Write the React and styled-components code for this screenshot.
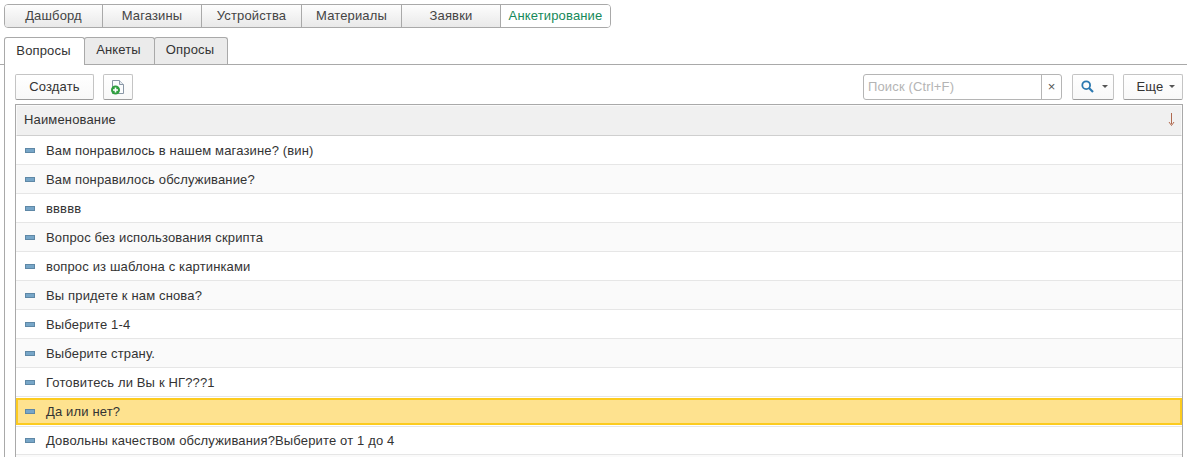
import React from "react";
import styled, { createGlobalStyle } from "styled-components";

const GlobalStyle = createGlobalStyle`
  html, body {
    margin: 0;
    height: 100%;
    overflow: hidden;
    background: #fff;
    font-family: "Liberation Sans", Arial, sans-serif;
    font-size: 13px;
    letter-spacing: 0.15px;
    color: #333;
  }
`;

const sections = [
  { title: "Дашборд", width: 98 },
  { title: "Магазины", width: 99 },
  { title: "Устройства", width: 100 },
  { title: "Материалы", width: 100 },
  { title: "Заявки", width: 99 },
  { title: "Анкетирование", width: 111, active: true },
];

const tabs = [
  { title: "Вопросы", width: 81, active: true },
  { title: "Анкеты", width: 71 },
  { title: "Опросы", width: 74 },
];

const questions = [
  "Вам понравилось в нашем магазине? (вин)",
  "Вам понравилось обслуживание?",
  "ввввв",
  "Вопрос без использования скрипта",
  "вопрос из шаблона с картинками",
  "Вы придете к нам снова?",
  "Выберите 1-4",
  "Выберите страну.",
  "Готовитесь ли Вы к НГ???1",
  "Да или нет?",
  "Довольны качеством обслуживания?Выберите от 1 до 4",
  "",
];

const App = () => {
  return (
    <Page>
      <GlobalStyle />
      <SectionBar>
        {sections.map((s) => (
          <Section key={s.title} $width={s.width} $active={s.active}>
            {s.title}
          </Section>
        ))}
      </SectionBar>
      <TabBar>
        {tabs.map((t) => (
          <Tab key={t.title} $width={t.width} $active={t.active}>
            {t.title}
          </Tab>
        ))}
      </TabBar>
      <Panel>
        <Toolbar>
          <Button $width={79}>Создать</Button>
          <Button $width={30}>
            <NewDocIcon />
          </Button>
          <Spacer />
          <SearchBox>
            <SearchInput>Поиск (Ctrl+F)</SearchInput>
            <ClearBtn>×</ClearBtn>
          </SearchBox>
          <Button $width={42} $inset={2} $gap={8}>
            <SearchIcon />
            <Caret />
          </Button>
          <Button $width={60} $inset={6}>
            Еще
            <Caret />
          </Button>
        </Toolbar>
        <Table>
          <HeadRow>
            Наименование
            <SortIcon />
          </HeadRow>
          {questions.map((q, i) => (
            <Row key={i} $odd={i % 2 === 1} $selected={q === "Да или нет?"}>
              {q && <Marker />}
              {q}
            </Row>
          ))}
        </Table>
      </Panel>
    </Page>
  );
};
export default App;

const NewDocIcon = () => (
  <svg width="16" height="17" viewBox="0 0 16 17">
    <path d="M2.5 2.5h7l4 4v9h-11z" fill="#fbfcfd" stroke="#8a97a6" />
    <path d="M9.5 2.5v4h4" fill="#e4eaf0" stroke="#8a97a6" />
    <circle cx="5.5" cy="12" r="4.5" fill="#2f9e3f" />
    <path d="M3 12h5M5.5 9.5v5" stroke="#fff" strokeWidth="1.6" />
  </svg>
);

const SearchIcon = () => (
  <svg width="13" height="13" viewBox="0 0 13 13">
    <circle cx="5.2" cy="5.2" r="3.9" fill="none" stroke="#2b78b0" strokeWidth="1.8" />
    <path d="M8 8l4 4" stroke="#2b78b0" strokeWidth="2.2" />
  </svg>
);

const SortIcon = () => (
  <SortSvg width="7" height="13" viewBox="0 0 7 13">
    <path d="M3.5 0v11" stroke="#b0694f" />
    <path d="M1 9l2.5 3.5L6 9" fill="none" stroke="#b0694f" />
  </SortSvg>
);

const Page = styled.div`
  width: 1187px;
  height: 457px;
  overflow: hidden;
  padding-top: 4px;
  box-sizing: border-box;
`;

const SectionBar = styled.div`
  display: flex;
  width: 607px;
  height: 24px;
  margin-left: 4px;
  box-sizing: border-box;
  border: 1px solid #a9a9a9;
  border-radius: 4px;
  overflow: hidden;
`;

const Section = styled.div`
  flex: 0 0 ${(p) => p.$width - (p.$active ? 1 : 0)}px;
  box-sizing: border-box;
  display: flex;
  align-items: center;
  justify-content: center;
  padding-bottom: 1px;
  border-left: 1px solid #a9a9a9;
  background: ${(p) => (p.$active ? "#fff" : "linear-gradient(#fdfdfd, #e9e9e9)")};
  color: ${(p) => (p.$active ? "#16895a" : "#444")};
  &:first-child {
    border-left: none;
    flex-basis: ${(p) => p.$width - 1}px;
  }
`;

const TabBar = styled.div`
  display: flex;
  height: 28px;
  margin-top: 9px;
  padding-left: 4px;
  box-sizing: border-box;
  border-bottom: 1px solid #a9a9a9;
`;

const Tab = styled.div`
  box-sizing: border-box;
  flex: 0 0 ${(p) => p.$width}px;
  margin-left: ${(p) => (p.$active ? 0 : -1)}px;
  height: ${(p) => (p.$active ? 28 : 27)}px;
  border: 1px solid #a9a9a9;
  border-bottom: none;
  border-radius: 3px 3px 0 0;
  background: ${(p) => (p.$active ? "#fff" : "#ebebeb")};
  display: flex;
  align-items: center;
  justify-content: center;
  padding: 0 2px 3px 0;
  position: relative;
  z-index: ${(p) => (p.$active ? 1 : 0)};
`;

const Panel = styled.div`
  margin-left: 4px;
  padding: 9px 4px 0 10px;
  height: 393px;
  box-sizing: border-box;
  border-left: 1px solid #a9a9a9;
`;

const Toolbar = styled.div`
  display: flex;
  align-items: flex-start;
  gap: 9px;
  height: 30px;
`;

const Spacer = styled.div`
  flex: 1;
`;

const Button = styled.div`
  box-sizing: border-box;
  flex: 0 0 ${(p) => p.$width}px;
  height: 26px;
  display: flex;
  align-items: center;
  justify-content: center;
  gap: ${(p) => p.$gap || 6}px;
  padding: 0 0 1px ${(p) => p.$inset || 0}px;
  background: linear-gradient(#fff, #f8f8f8);
  border: 1px solid #c4c4c4;
  border-bottom-color: #9c9c9c;
  border-radius: 2px;
`;

const Caret = styled.span`
  width: 0;
  height: 0;
  border-left: 3px solid transparent;
  border-right: 3px solid transparent;
  border-top: 3px solid #555;
`;

const SearchBox = styled.div`
  box-sizing: border-box;
  display: flex;
  width: 199px;
  height: 26px;
  margin-right: 1px;
  border: 1px solid #b5b5b5;
  border-radius: 3px;
`;

const SearchInput = styled.div`
  flex: 1;
  padding-left: 4px;
  line-height: 24px;
  color: #b4b4b4;
`;

const ClearBtn = styled.div`
  flex: 0 0 19px;
  border-left: 1px solid #b5b5b5;
  text-align: center;
  line-height: 24px;
  color: #555;
`;

const Table = styled.div`
  box-sizing: border-box;
  width: 1168px;
  border: 1px solid #a9a9a9;
  border-bottom: none;
  height: 360px;
`;

const HeadRow = styled.div`
  box-sizing: border-box;
  height: 31px;
  display: flex;
  align-items: center;
  justify-content: space-between;
  padding: 0 6px 3px 7px;
  background: #f0f0f0;
  border: 1px solid #fafafa;
  border-bottom: 1px solid #cfcfcf;
`;

const SortSvg = styled.svg`
  display: block;
`;

const Row = styled.div`
  box-sizing: border-box;
  height: 29px;
  display: flex;
  align-items: center;
  padding-left: 8px;
  background: ${(p) => (p.$selected ? "#fee28f" : p.$odd ? "#fafafa" : "#fff")};
  border-bottom: 1px solid #e6e6e6;
  ${(p) => p.$selected && `
    height: 27px;
    margin: 1px 0;
    padding-left: 6px;
    border: 2px solid #fccb1f;
    position: relative;
    box-shadow: 0 1px 0 #fff, 0 2px 0 #e6e6e6;
  `}
`;

const Marker = styled.span`
  width: 10px;
  height: 5px;
  margin: 0 11px 0 1px;
  box-sizing: border-box;
  background: #77a6c8;
  border: 1px solid #5f88a6;
`;
